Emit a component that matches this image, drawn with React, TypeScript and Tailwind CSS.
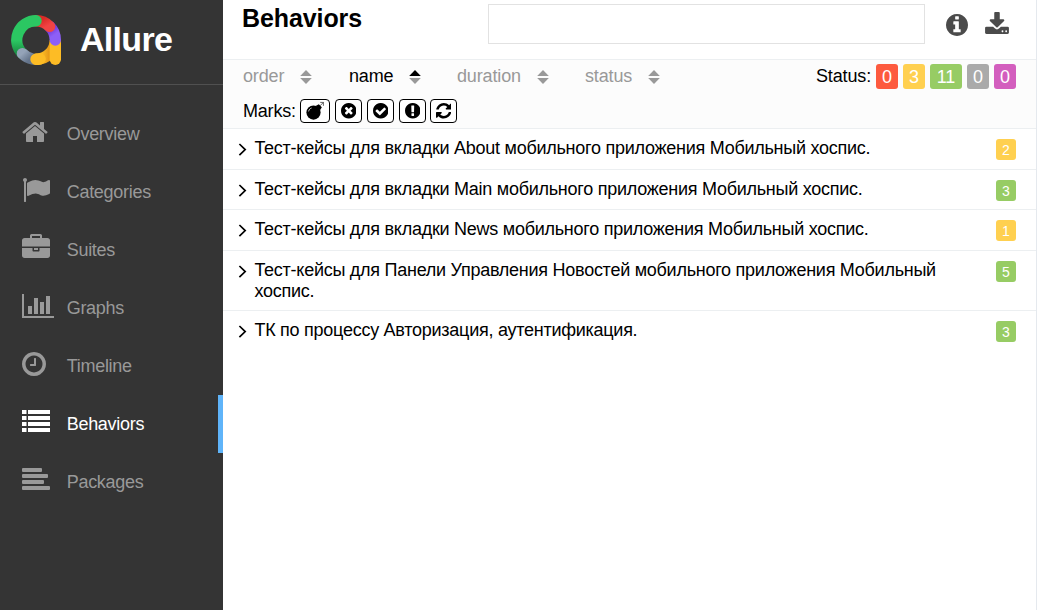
import React from 'react';

type Glyph = { box: string; d: string };

const DISC =
  'M1664 896q0 209-103 385.5t-279.5 279.5-385.5 103-385.5-103-279.5-279.5-103-385.5 103-385.5 279.5-279.5 385.5-103 385.5 103 279.5 279.5 103 385.5z';

const glyphs = {
  home: {
    box: '64 0 1664 1792',
    d: 'M1472 992v480q0 26-19 45t-45 19h-384v-384h-256v384h-384q-26 0-45-19t-19-45v-480q0-1 .5-3t.5-3l575-474 575 474q1 2 1 6zm223-69l-62 74q-8 9-21 11h-3q-13 0-21-7l-692-577-692 577q-12 8-24 7-13-2-21-11l-62-74q-8-10-7-23.5t11-21.5l719-599q32-26 76-26t76 26l244 204v-195q0-14 9-23t23-9h192q14 0 23 9t9 23v408l219 182q10 8 11 21.5t-7 23.5z',
  },
  flag: {
    box: '0 0 1792 1792',
    d: 'M320 256q0 72-64 110v1266q0 13-9.5 22.5t-22.5 9.5h-64q-13 0-22.5-9.5t-9.5-22.5v-1266q-64-38-64-110 0-53 37.5-90.5t90.5-37.5 90.5 37.5 37.5 90.5zm1472 64v763q0 25-12.5 38.5t-39.5 27.5q-215 116-369 116-61 0-123.5-22t-108.5-48-115.5-48-142.5-22q-192 0-464 146-17 9-33 9-26 0-45-19t-19-45v-742q0-32 31-55 21-14 79-43 236-120 421-120 107 0 200 29t219 88q38 19 88 19 54 0 117.5-21t110-47 88-47 54.5-21q26 0 45 19t19 45z',
  },
  briefcase: {
    box: '0 0 1792 1792',
    d: 'M640 256h512v-128h-512v128zm1152 640v480q0 66-47 113t-113 47h-1472q-66 0-113-47t-47-113v-480h672v160q0 26 19 45t45 19h320q26 0 45-19t19-45v-160h672zm-768 0v128h-256v-128h256zm768-480v384h-1792v-384q0-66 47-113t113-47h352v-160q0-40 28-68t68-28h576q40 0 68 28t28 68v160h352q66 0 113 47t47 113z',
  },
  chart: {
    box: '0 0 2048 1792',
    d: 'M640 896v512h-256v-512h256zm384-512v1024h-256v-1024h256zm1024 1152v128h-2048v-1536h128v1408h1920zm-640-896v768h-256v-768h256zm384-384v1152h-256v-1152h256z',
  },
  clock: {
    box: '128 0 1536 1792',
    d: 'M1024 544v448q0 14-9 23t-23 9h-320q-14 0-23-9t-9-23v-64q0-14 9-23t23-9h224v-352q0-14 9-23t23-9h64q14 0 23 9t9 23zm416 352q0-148-73-273t-198-198-273-73-273 73-198 198-73 273 73 273 198 198 273 73 273-73 198-198 73-273zm224 0q0 209-103 385.5t-279.5 279.5-385.5 103-385.5-103-279.5-279.5-103-385.5 103-385.5 279.5-279.5 385.5-103 385.5 103 279.5 279.5 103 385.5z',
  },
  list: {
    box: '0 0 28 28',
    d: 'M0 2h4.5v4H0zM6 2h22v4H6zM0 8h4.5v4H0zM6 8h22v4H6zM0 14h4.5v4H0zM6 14h22v4H6zM0 20h4.5v4H0zM6 20h22v4H6z',
  },
  lines: {
    box: '0 2 28 28',
    d: 'M1 4h18a1 1 0 0 1 1 1v2a1 1 0 0 1-1 1H1a1 1 0 0 1-1-1V5a1 1 0 0 1 1-1zM1 10h24a1 1 0 0 1 1 1v2a1 1 0 0 1-1 1H1a1 1 0 0 1-1-1v-2a1 1 0 0 1 1-1zM1 16h20a1 1 0 0 1 1 1v2a1 1 0 0 1-1 1H1a1 1 0 0 1-1-1v-2a1 1 0 0 1 1-1zM1 22h26a1 1 0 0 1 1 1v2a1 1 0 0 1-1 1H1a1 1 0 0 1-1-1v-2a1 1 0 0 1 1-1z',
  },
  info: {
    box: '128 128 1536 1536',
    d: 'M1152 1376v-160q0-14-9-23t-23-9h-96v-512q0-14-9-23t-23-9h-320q-14 0-23 9t-9 23v160q0 14 9 23t23 9h96v320h-96q-14 0-23 9t-9 23v160q0 14 9 23t23 9h448q14 0 23-9t9-23zm-128-896v-160q0-14-9-23t-23-9h-192q-14 0-23 9t-9 23v160q0 14 9 23t23 9h192q14 0 23-9t9-23z' + DISC,
  },
  download: {
    box: '64 0 1664 1536',
    d: 'M1344 1344q0-26-19-45t-45-19-45 19-19 45 19 45 45 19 45-19 19-45zm256 0q0-26-19-45t-45-19-45 19-19 45 19 45 45 19 45-19 19-45zm128-224v320q0 40-28 68t-68 28h-1472q-40 0-68-28t-28-68v-320q0-40 28-68t68-28h465l135 136q58 56 136 56t136-56l136-136h464q40 0 68 28t28 68zm-325-569q17 41-14 70l-448 448q-18 19-45 19t-45-19l-448-448q-31-29-14-70 17-39 59-39h256v-448q0-26 19-45t45-19h256q26 0 45 19t19 45v448h256q42 0 59 39z',
  },
  cross: {
    box: '128 128 1536 1536',
    d: 'M1277 1122q0-26-19-45l-181-181 181-181q19-19 19-45 0-27-19-46l-90-90q-19-19-46-19-26 0-45 19l-181 181-181-181q-19-19-45-19-27 0-46 19l-90 90q-19 19-19 46 0 26 19 45l181 181-181 181q-19 19-19 45 0 27 19 46l90 90q19 19 46 19 26 0 45-19l181-181 181 181q19 19 45 19 27 0 46-19l90-90q19-19 19-46z' + DISC,
  },
  check: {
    box: '128 128 1536 1536',
    d: 'M1412 734q0-28-18-46l-91-90q-19-19-45-19t-45 19l-408 407-226-226q-19-19-45-19t-45 19l-91 90q-18 18-18 46 0 27 18 45l362 362q19 19 45 19 27 0 46-19l543-543q18-18 18-45z' + DISC,
  },
  exclamation: {
    box: '128 128 1536 1536',
    d: 'M1024 1375v-190q0-14-9.5-23.5t-22.5-9.5h-192q-13 0-23 10t-10 23v190q0 13 10 23t23 10h192q13 0 22.5-9.5t9.5-23.5zm-2-344l18-621q0-12-10-18-10-8-24-8h-220q-14 0-24 8-10 6-10 18l17 621q0 10 10 17.5t24 7.5h185q14 0 23.5-7.5t10.5-17.5z' + DISC,
  },
  refresh: {
    box: '128 128 1536 1536',
    d: 'M1639 1056q0 5-1 7-64 268-268 434.5t-478 166.5q-146 0-282.5-55t-243.5-157l-129 129q-19 19-45 19t-45-19-19-45v-448q0-26 19-45t45-19h448q26 0 45 19t19 45-19 45l-137 137q71 66 161 102t187 36q134 0 250-65t186-179q11-17 53-117 8-23 30-23h192q13 0 22.5 9.5t9.5 22.5zm25-800v448q0 26-19 45t-45 19h-448q-26 0-45-19t-19-45 19-45l138-138q-148-137-349-137-134 0-250 65t-186 179q-11 17-53 117-8 23-30 23h-199q-13 0-22.5-9.5t-9.5-22.5v-7q65-268 270-434.5t480-166.5q146 0 284 55.5t245 156.5l130-129q19-19 45-19t45 19 19 45z',
  },
} satisfies Record<string, Glyph>;

function Icon({ glyph, className }: { glyph: Glyph; className: string }) {
  return (
    <svg viewBox={glyph.box} className={className} fill="currentColor" fillRule="evenodd" aria-hidden="true">
      <path d={glyph.d} />
    </svg>
  );
}

function Logo() {
  return (
    <svg viewBox="0 0 50 50" className="h-[50px] w-[50px]" fill="none" strokeWidth="11.4" strokeLinecap="round" aria-hidden="true">
      <defs>
        <linearGradient id="green" x1="0" y1="0" x2="0" y2="1">
          <stop offset="0.6" stopColor="#2bc762" />
          <stop offset="1" stopColor="#1b8a43" />
        </linearGradient>
        <linearGradient id="red" x1="0" y1="0" x2="1" y2="0.7">
          <stop offset="0.2" stopColor="#d92b26" />
          <stop offset="1" stopColor="#f04444" />
        </linearGradient>
        <linearGradient id="violet" x1="0" y1="0" x2="0.3" y2="1">
          <stop offset="0.1" stopColor="#6f2fd0" />
          <stop offset="0.8" stopColor="#8d5ff7" />
        </linearGradient>
        <linearGradient id="slate" x1="0" y1="0" x2="1" y2="0.6">
          <stop offset="0" stopColor="#94a3b8" />
          <stop offset="1" stopColor="#64748b" />
        </linearGradient>
        <linearGradient id="amber" x1="0" y1="0" x2="1" y2="0">
          <stop offset="0.3" stopColor="#fdbc25" />
          <stop offset="0.9" stopColor="#d98510" />
        </linearGradient>
      </defs>
      <path d="M44.3 27V25A19.3 19.3 0 0 1 25 44.3" stroke="url(#amber)" />
      <path d="M44.3 28V44.3" stroke="#fdbc25" />
      <path d="M38.6 11.4A19.3 19.3 0 0 1 44.3 25" stroke="url(#violet)" />
      <path d="M25 5.7A19.3 19.3 0 0 1 38.6 11.4" stroke="url(#red)" />
      <path d="M25 5.7A19.3 19.3 0 0 0 11.4 38.6" stroke="url(#green)" />
      <path d="M11.4 38.6A19.3 19.3 0 0 0 21.5 44" stroke="url(#slate)" />
      <path d="M25 44.3A19.3 19.3 0 0 0 29 43.9" stroke="#fdbc25" />
    </svg>
  );
}

function Bomb() {
  return (
    <svg viewBox="0 0 20 20" className="h-5 w-5" fill="none" stroke="currentColor" aria-hidden="true">
      <circle cx="8.5" cy="11.6" r="7.1" fill="currentColor" stroke="none" />
      <path d="M10.6 5l3.2-1.8 3 3-1.8 3z" fill="currentColor" stroke="none" />
      <path d="M3.6 10.4c.4-1.8 1.5-2.9 3-3.4" stroke="#fff" strokeWidth="0.8" />
      <path d="M15 4.8l3-3M15.2 1.4h3.4M18.4 1.4v3.4" strokeWidth="1" opacity=".6" />
    </svg>
  );
}

const nav = [
  { label: 'Overview', glyph: glyphs.home, size: 'h-7 w-[26px]' },
  { label: 'Categories', glyph: glyphs.flag, size: 'h-7 w-7' },
  { label: 'Suites', glyph: glyphs.briefcase, size: 'h-7 w-7' },
  { label: 'Graphs', glyph: glyphs.chart, size: 'h-7 w-8' },
  { label: 'Timeline', glyph: glyphs.clock, size: 'h-7 w-6' },
  { label: 'Behaviors', glyph: glyphs.list, size: 'h-7 w-7', active: true },
  { label: 'Packages', glyph: glyphs.lines, size: 'h-7 w-7' },
];

function Sidebar() {
  return (
    <aside className="flex w-[223px] shrink-0 flex-col bg-[#343434]">
      <div className="flex h-[85px] items-start border-b border-[#505050] pt-[15px] pl-[11px]">
        <Logo />
        <span className="pt-1 pl-[19px] text-[34px] leading-10 font-bold tracking-[-0.7px] text-white">Allure</span>
      </div>
      <nav className="flex flex-col pt-5">
        {nav.map(({ label, glyph, size, active }) => (
          <a
            key={label}
            className={
              active
                ? 'flex h-[58px] items-center border-r-[5px] border-[#5fb4f9] pl-[21.7px] text-white'
                : 'flex h-[58px] items-center pl-[21.7px] text-[#999]'
            }
          >
            <span className="flex w-[45px] pb-[5px]">
              <Icon glyph={glyph} className={size} />
            </span>
            <span className="text-[18px] leading-[22px] tracking-[-0.28px]">{label}</span>
          </a>
        ))}
      </nav>
    </aside>
  );
}

const sorters = [
  { label: 'order', width: 'w-[106px]' },
  { label: 'name', width: 'w-[108px]', active: true },
  { label: 'duration', width: 'w-[128px]' },
  { label: 'status', width: 'w-[90px]' },
];

const statuses = [
  { id: 'failed', count: 0, style: 'w-[22px] bg-[#fd5a3e]' },
  { id: 'broken', count: 3, style: 'w-[22px] bg-[#ffd050]' },
  { id: 'passed', count: 11, style: 'w-8 bg-[#97cc64]' },
  { id: 'skipped', count: 0, style: 'w-[22px] bg-[#aaa]' },
  { id: 'unknown', count: 0, style: 'w-[22px] bg-[#d35ebe]' },
];

const marks = [
  { glyph: glyphs.cross, width: 'w-[27px]' },
  { glyph: glyphs.check, width: 'w-[27px]' },
  { glyph: glyphs.exclamation, width: 'w-[27px]' },
  { glyph: glyphs.refresh, width: '-ml-px w-[27px]' },
];

const rows = [
  { text: 'Тест-кейсы для вкладки About мобильного приложения Мобильный хоспис.', count: 2, color: 'bg-[#ffd050]', height: 'h-[41px]' },
  { text: 'Тест-кейсы для вкладки Main мобильного приложения Мобильный хоспис.', count: 3, color: 'bg-[#97cc64]', height: 'h-10' },
  { text: 'Тест-кейсы для вкладки News мобильного приложения Мобильный хоспис.', count: 1, color: 'bg-[#ffd050]', height: 'h-[41px]' },
  { text: 'Тест-кейсы для Панели Управления Новостей мобильного приложения Мобильный хоспис.', count: 5, color: 'bg-[#97cc64]', height: 'h-[60px]' },
  { text: 'ТК по процессу Авторизация, аутентификация.', count: 3, color: 'bg-[#97cc64]', height: 'h-[41px]' },
];

function Toolbar() {
  return (
    <div className="h-[70px] border-y border-[#eceff1] bg-[#fcfcfc] pr-5 pl-5 text-[18px] leading-[22px]">
      <div className="flex h-[31px] items-center tracking-[-0.15px]">
        {sorters.map(({ label, width, active }) => (
          <div key={label} className={`flex items-center gap-4 ${width} ${active ? 'text-black' : 'text-[#999]'}`}>
            <span>{label}</span>
            <svg viewBox="0 0 12 14" className="mt-[2px] h-[14px] w-3 shrink-0" aria-hidden="true">
              <path d="M.2 6 6 0l5.8 6z" fill={active ? '#000' : '#999'} />
              <path d="M.2 8 6 14l5.8-6z" fill="#999" />
            </svg>
          </div>
        ))}
        <div className="ml-auto flex items-center gap-[5px]">
          <span>Status:</span>
          {statuses.map(({ id, count, style }) => (
            <span key={id} className={`mt-px h-[25px] rounded-[3px] text-center leading-[26px] text-white ${style}`}>
              {count}
            </span>
          ))}
        </div>
      </div>
      <div className="mt-[2px] flex h-[35px] items-center gap-[5px]">
        <span className="w-[52px] tracking-[-0.2px] whitespace-nowrap">Marks:</span>
        <span className="mt-px flex h-6 w-[30px] items-center justify-center rounded-[4px] border border-black bg-white">
          <Bomb />
        </span>
        {marks.map(({ glyph, width }, i) => (
          <span key={i} className={`mt-px flex h-6 items-center justify-center rounded-[4px] border border-black bg-white ${width}`}>
            <Icon glyph={glyph} className="h-[15.5px] w-[15.5px]" />
          </span>
        ))}
      </div>
    </div>
  );
}

export default function App() {
  return (
    <div className="flex h-[610px] w-[1037px] overflow-hidden bg-white font-['Liberation_Sans',Arial,sans-serif] text-black">
      <Sidebar />
      <main className="min-w-0 flex-1 border-r border-[#e5e9ee]">
        <header className="flex h-[59px] items-start pl-[19px]">
          <h1 className="w-[246px] pt-[3px] text-[25px] leading-[30px] font-bold tracking-[-0.1px]">Behaviors</h1>
          <input aria-label="Search" className="mt-1 h-10 w-[437px] border border-[#e2e2e2] bg-white px-2 outline-none" />
          <Icon glyph={glyphs.info} className="mt-[14px] ml-[21px] h-[22px] w-[22px] text-[#4b4b4b]" />
          <Icon glyph={glyphs.download} className="mt-[12px] ml-[17px] h-[22px] w-6 text-[#4b4b4b]" />
        </header>
        <Toolbar />
        <div className="text-[18px] leading-[21px]">
          {rows.map(({ text, count, color, height }) => (
            <div key={text} className={`flex items-start border-b border-[#eceff1] pt-[9px] pr-5 pl-[15px] last:border-b-0 ${height}`}>
              <svg viewBox="0 0 9 13" className="mt-[5px] mr-[7px] h-[13px] w-[9px] shrink-0" fill="none" stroke="#000" strokeWidth="1.7" aria-hidden="true">
                <path d="M1.4 1 7.2 6.6l-5.8 5.6" />
              </svg>
              <span className="w-[690px] pl-[0.4px] tracking-[-0.26px]">{text}</span>
              <span className={`mt-px ml-auto h-[21px] w-5 rounded-[3px] text-center text-[14px] leading-[22px] text-white ${color}`}>{count}</span>
            </div>
          ))}
        </div>
      </main>
    </div>
  );
}
